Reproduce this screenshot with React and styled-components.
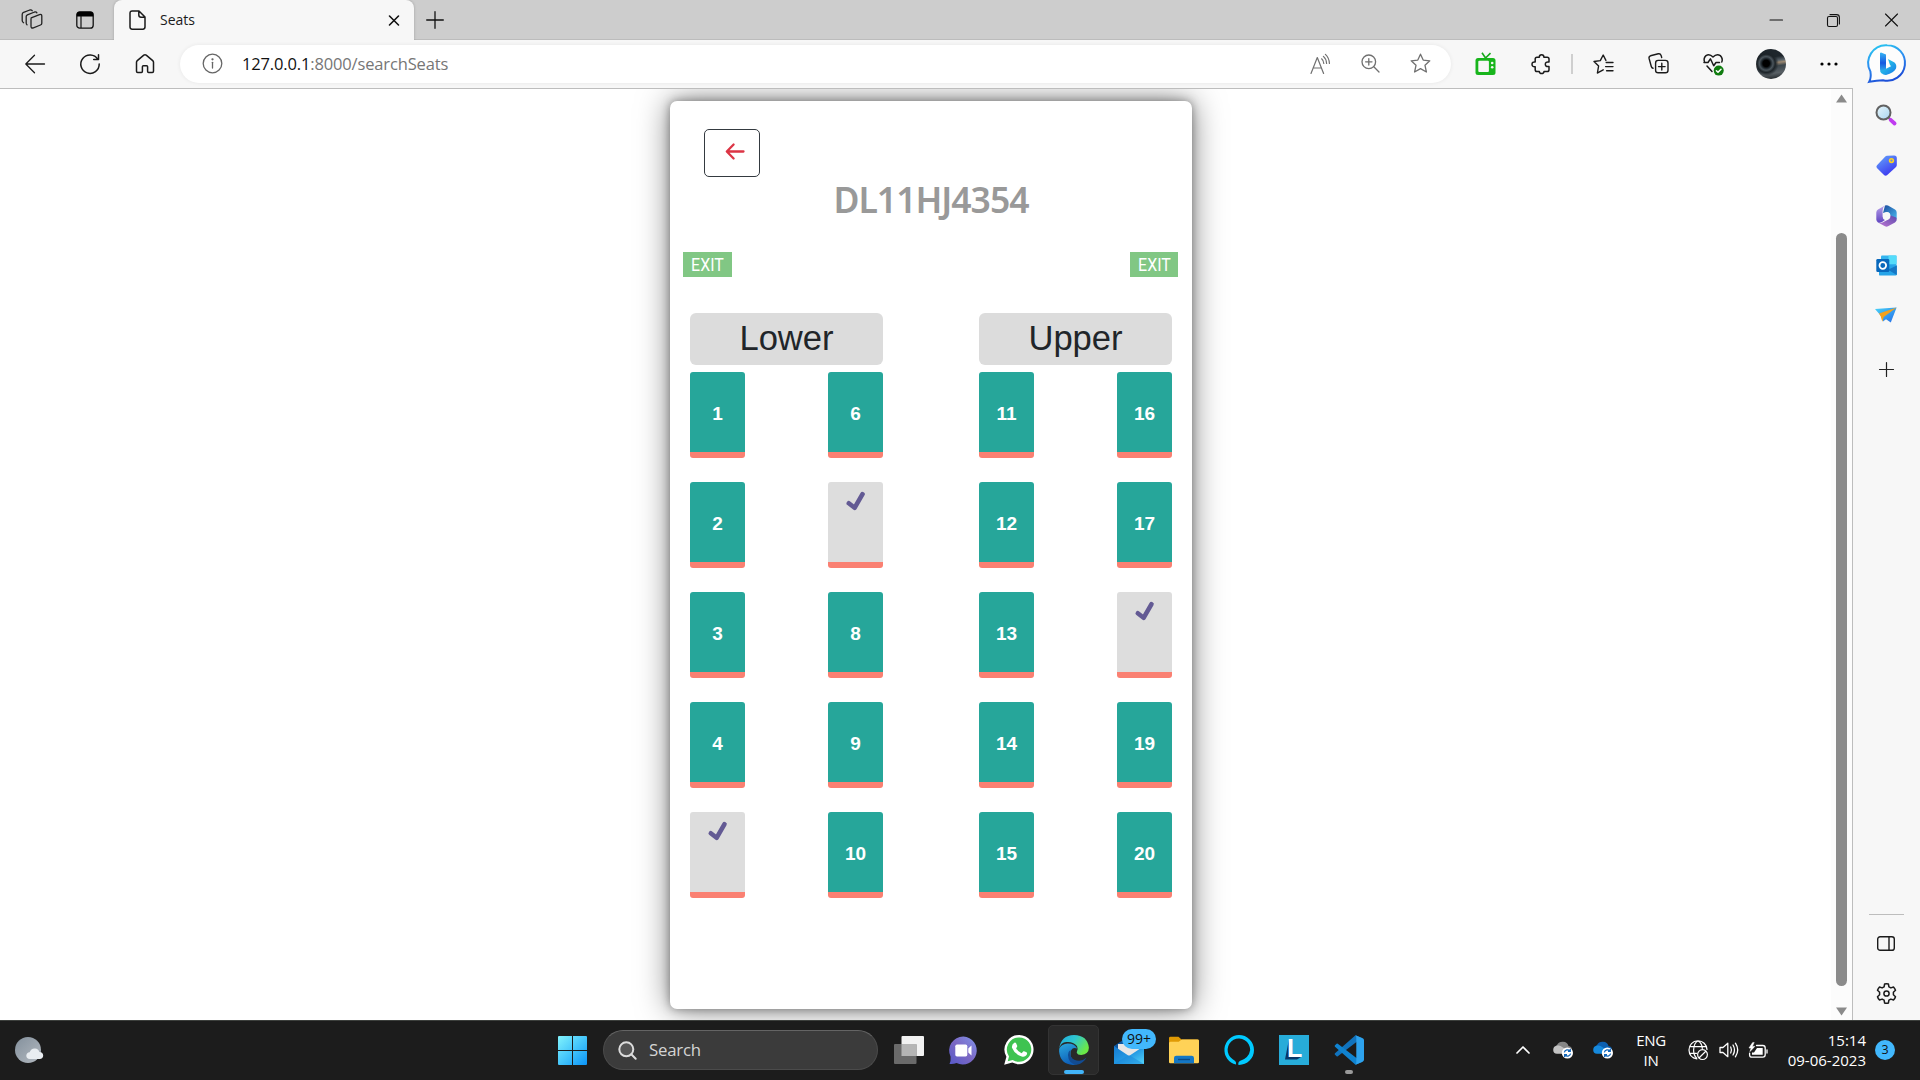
import React from "react";
import styled, { createGlobalStyle } from "styled-components";

const ui = `"Open Sans", "Noto Sans", sans-serif`;
const arial = `"Liberation Sans", Arial, sans-serif`;

const GlobalStyle = createGlobalStyle`
  * { box-sizing: border-box; }
  body { margin: 0; background: #fff; overflow: hidden; font-family: ${ui}; }
  svg { display: block; flex: none; overflow: visible; }
`;

const Screen = styled.div`
  width: 1920px;
  height: 1080px;
  display: flex;
  flex-direction: column;
  overflow: hidden;
`;

/* ---------- browser chrome ---------- */

const TabStrip = styled.header`
  height: 40px;
  flex: none;
  display: flex;
  background: #cdcdcd;
  box-shadow: inset 0 -1px 0 #bcbcbc;
`;
const StripTools = styled.div`
  width: 114px;
  display: flex;
  align-items: center;
  gap: 33px;
  padding-left: 21px;
`;
const Tab = styled.div`
  width: 300px;
  display: flex;
  align-items: center;
  padding: 0 14px 0 15px;
  background: #f7f7f7;
  border-radius: 8px 8px 0 0;
  box-shadow: 0 0 3px rgba(0, 0, 0, 0.22);
  clip-path: inset(0 -4px 0 -4px);
`;
const TabTitle = styled.span`
  flex: 1;
  margin-left: 14px;
  font-size: 14px;
  line-height: 20px;
  color: #1b1b1b;
`;
const NewTab = styled.div`
  flex: 1;
  display: flex;
  align-items: center;
  padding-left: 12px;
`;
const WindowButton = styled.div`
  width: 57.5px;
  display: flex;
  align-items: center;
  justify-content: center;
`;
const Toolbar = styled.nav`
  height: 49px;
  flex: none;
  display: flex;
  align-items: center;
  padding: 0 4px 2px 7px;
  background: #f7f7f7;
`;
const ToolButton = styled.div`
  width: ${(p) => p.$w || 55}px;
  height: 47px;
  flex: none;
  display: flex;
  align-items: center;
  justify-content: center;
`;
const Divider = styled.div`
  width: 2px;
  height: 20px;
  margin: 0 3px;
  background: #cfcfcf;
`;
const AddressBar = styled.div`
  flex: 1;
  height: 38px;
  margin: 0 7px 0 8px;
  padding: 0 6px 0 22px;
  display: flex;
  align-items: center;
  border-radius: 19px;
  background: #fff;
  box-shadow: 0 0 4px rgba(0, 0, 0, 0.07);
`;
const Url = styled.div`
  flex: 1;
  margin-left: 19px;
  font-size: 16.5px;
  letter-spacing: -0.15px;
  line-height: 24px;
  color: #767676;
  b { font-weight: 400; color: #111; }
`;
const Avatar = styled.div`
  width: 30px;
  height: 30px;
  border-radius: 50%;
  background:
    radial-gradient(circle at 34% 48%, #000 0 13%, #1c242a 19%, #4b555c 27%, #1c2328 36%, transparent 50%),
    linear-gradient(172deg, #1e262c 0 30%, #59636a 42%, #9b8871 48%, #3a444b 58%, #596065 78%, #15191c 100%);
`;

/* ---------- page ---------- */

const Body = styled.div`
  height: 931px;
  flex: none;
  display: flex;
  background: #f7f7f7;
`;
const Viewport = styled.main`
  width: 1853px;
  display: flex;
  justify-content: space-between;
  background: #fff;
  border: solid #bdbdbd;
  border-width: 1px 1px 0 0;
  margin-top: -1px;
  overflow: hidden;
`;
const Card = styled.section`
  width: 522px;
  height: 908px;
  margin: 12px 0 0 670px;
  padding: 28px 20px 0;
  border-radius: 7px;
  background: #fff;
  box-shadow: 0 0 32px rgba(0, 0, 0, 0.5), 0 0 10px rgba(0, 0, 0, 0.36);
`;
const BackButton = styled.button`
  display: flex;
  align-items: flex-start;
  width: 56px;
  height: 48px;
  margin-left: 14px;
  padding: 13px 0 0 20px;
  border: 1px solid #343a40;
  border-radius: 5px;
  background: #fff;
`;
const BusNumber = styled.h1`
  height: 46px;
  margin: 0;
  text-align: center;
  font: 600 35.5px/44px "Noto Sans", "Open Sans", sans-serif;
  letter-spacing: -1px;
  color: #999;
`;
const Exits = styled.div`
  display: flex;
  justify-content: space-between;
  margin: 29px -6px 0 -7px;
`;
const Exit = styled.div`
  width: ${(p) => p.$w}px;
  height: 25px;
  display: flex;
  justify-content: center;
  background: #81c784;
  color: #fff;
  font: 400 19px/26px Roboto, sans-serif;
  span { transform: scaleX(0.84); }
`;
const Decks = styled.div`
  display: flex;
  justify-content: space-between;
  margin-top: 36px;
`;
const Deck = styled.div`
  width: 193px;
`;
const DeckTitle = styled.h2`
  height: 52px;
  margin: 0 0 7px;
  border-radius: 6px;
  background: #dcdcdc;
  text-align: center;
  font: 400 34.6px/51px ${arial};
  color: #212529;
`;
const Seats = styled.div`
  display: grid;
  grid-template-columns: 55px 55px;
  grid-auto-flow: column;
  grid-template-rows: repeat(5, 86px);
  justify-content: space-between;
  row-gap: 24px;
`;
const Seat = styled.div`
  display: flex;
  justify-content: center;
  align-items: ${(p) => (p.$taken ? "flex-start" : "center")};
  padding-top: ${(p) => (p.$taken ? 9 : 3)}px;
  border-bottom: 6px solid salmon;
  border-radius: 3px;
  background: ${(p) => (p.$taken ? "#dddddd" : "#26a69a")};
  color: #fff;
  font: 700 19px/22px ${arial};
`;
const ScrollTrack = styled.div`
  width: 21px;
  display: flex;
  flex-direction: column;
  align-items: center;
  padding: 5px 0 4px;
  background: #fcfcfc;
`;
const Thumb = styled.div`
  width: 11px;
  height: 753px;
  margin: 130px 0 21px;
  border-radius: 6px;
  background: #8b8b8b;
`;
const Side = styled.aside`
  flex: 1;
  display: flex;
  flex-direction: column;
  align-items: center;
  padding-right: 1px;
`;
const SideItem = styled.div`
  height: ${(p) => p.$h || 50}px;
  display: flex;
  align-items: center;
`;
const SideRule = styled.div`
  width: 35px;
  height: 1px;
  margin: auto 0 3px;
  background: #bdbdbd;
`;

/* ---------- taskbar ---------- */

const Taskbar = styled.footer`
  height: 60px;
  flex: none;
  display: flex;
  align-items: center;
  padding-bottom: 1px;
  background: #1c1c1c;
  border-top: 1px solid #3c3f3c;
  color: #fff;
`;
const Weather = styled.div`
  width: 558px;
  padding-left: 14px;
`;
const SearchBox = styled.div`
  width: 275px;
  height: 40px;
  margin: 0 3px 0 16px;
  padding: 0 14px;
  display: flex;
  align-items: center;
  gap: 12px;
  border-radius: 20px;
  border: 1px solid #4b4b4b;
  border-top-color: #646464;
  background: #3b3b3b;
  color: #d4d4d4;
  font-size: 16.8px;
  line-height: 24px;
  letter-spacing: -0.2px;
`;
const App55 = styled.div`
  position: relative;
  width: 51px;
  height: 50px;
  margin: 0 2px;
  display: flex;
  align-items: center;
  justify-content: center;
  border-radius: 5px;
  border: 1px solid ${(p) => (p.$active ? "#333" : "transparent")};
  background: ${(p) => (p.$active ? "#292929" : "none")};
`;
const Indicator = styled.i`
  position: absolute;
  bottom: 0;
  width: ${(p) => (p.$on ? 20 : 8)}px;
  height: 4px;
  border-radius: 2px;
  background: ${(p) => (p.$on ? "#42b4f8" : "#9a9a9a")};
`;
const MailBadge = styled.span`
  position: absolute;
  left: 18px;
  top: 3px;
  width: 34px;
  height: 20px;
  border-radius: 10px;
  background: #42b8fd;
  color: #111;
  text-align: center;
  font-size: 14px;
  line-height: 20px;
`;
const Tray = styled.div`
  flex: 1;
  display: flex;
  align-items: center;
  justify-content: flex-end;
  padding-right: 25px;
`;
const TrayIcon = styled.div`
  width: ${(p) => p.$w}px;
  display: flex;
  justify-content: center;
`;
const TrayText = styled.div`
  width: ${(p) => p.$w}px;
  text-align: ${(p) => p.$align || "center"};
  font-size: 15px;
  line-height: 20px;
  letter-spacing: ${(p) => (p.$align ? 0 : -0.3)}px;
`;
const Count = styled.span`
  width: 20px;
  height: 20px;
  margin-left: 9px;
  border-radius: 50%;
  background: #42b8fd;
  color: #111;
  text-align: center;
  font-size: 12.5px;
  line-height: 20px;
`;

const Line = ({ w = 20, h = w, box, c = "#1b1b1b", s = 1.3, children, ...rest }) => (
  <svg width={w} height={h} viewBox={box || `0 0 ${w} ${h}`} fill="none" stroke={c} strokeWidth={s}
    strokeLinecap="round" strokeLinejoin="round" {...rest}>{children}</svg>
);

const Tick = () => (
  <Line w={20} h={20} c="#635a94" s={4.6}><path d="M2.8 12.3L8.6 16.8L16.5 3.2" /></Line>
);

function SeatDeck({ title, first, taken }) {
  return (
    <Deck>
      <DeckTitle>{title}</DeckTitle>
      <Seats>
        {Array.from({ length: 10 }, (_, i) => first + i).map((n) => (
          <Seat key={n} $taken={taken.includes(n)}>{taken.includes(n) ? <Tick /> : n}</Seat>
        ))}
      </Seats>
    </Deck>
  );
}

const Bing = () => (
  <svg width="38" height="40" viewBox="0 0 38 40">
    <defs>
      <linearGradient id="bingRing" x1="0" y1="0" x2="0.35" y2="1"><stop stopColor="#29cdf0" /><stop offset=".55" stopColor="#2b8cf0" /><stop offset="1" stopColor="#1d50d8" /></linearGradient>
      <linearGradient id="bingStem" x1="0" y1="0" x2="0" y2="1"><stop stopColor="#36b5f4" /><stop offset=".5" stopColor="#1557e0" /><stop offset="1" stopColor="#35c8ee" /></linearGradient>
      <linearGradient id="bingBowl" x1="0" y1="0" x2="1" y2="1"><stop stopColor="#2ee0e8" /><stop offset="1" stopColor="#1677e8" /></linearGradient>
    </defs>
    <path d="M19.2 1.2A17.8 17.8 0 1 1 15 36.3Q9 36.5 1.2 37.8Q3.4 34 2.4 27.5A17.8 17.8 0 0 1 19.2 1.2Z" fill="#fdfdfd" stroke="url(#bingRing)" strokeWidth="2" />
    <path d="M13 8.5L18 10.5V27L13.5 29.5Q12 28 12 25V9Z" fill="url(#bingStem)" />
    <path d="M20 15L26.5 18.5Q29 20.5 28 24.5Q26 28.5 18 31Q14.5 31 12.5 27.5L23 22.3L21.8 20.5Z" fill="url(#bingBowl)" />
  </svg>
);

function Chrome() {
  return (
    <>
      <TabStrip>
        <StripTools>
          <Line w={22} c="#222">
            <path d="M10.2 8.8L18.5 5.6Q20.8 5 20.8 7V14.2Q20.8 15.5 19.5 16L12.4 18.8Q10 19.6 10 17.3V9.6M6 15.8Q5.2 15.2 5.2 14V7.6Q5.2 6.4 6.4 5.8L13.6 3Q15.2 2.6 15.9 3.8M2.6 13.8Q1.2 13 1.2 11.6V5.6Q1.2 4 2.6 3.4L8.8 1Q10.4.6 11.2 1.7" />
          </Line>
          <svg width="18" height="18" viewBox="0 0 18 18"><rect x=".8" y=".8" width="16.4" height="16.4" rx="3" fill="none" stroke="#111" strokeWidth="1.3" /><path d="M.8 5.5V3.5Q.8.8 3.5.8H14.5Q17.2.8 17.2 3.5V5.5Z" fill="#000" /><path d="M5 5V17" stroke="#111" strokeWidth="1.2" /></svg>
        </StripTools>
        <Tab>
          <Line w={17} h={20} s={1.5}><path d="M3.2 1H10L16 7V16.8Q16 19.2 13.8 19.2H3.2Q1 19.2 1 16.8V3.2Q1 1 3.2 1ZM9.8 1V5Q9.8 7.2 12 7.2H16" /></Line>
          <TabTitle>Seats</TabTitle>
          <Line w={12} s={1.6} c="#111"><path d="M1.5 2L10.5 11M10.5 2L1.5 11" /></Line>
        </Tab>
        <NewTab><Line w={18} c="#111"><path d="M9 .7V17.3M.7 9H17.3" /></Line></NewTab>
        <WindowButton><Line w={13} s={1.1} c="#111"><path d="M0 6H12.5" /></Line></WindowButton>
        <WindowButton><Line w={13} s={1.1} c="#111"><rect x=".5" y="2.5" width="10" height="10" rx="1.5" /><path d="M3 .6H9.5Q12.4.6 12.4 3.5V10" /></Line></WindowButton>
        <WindowButton><Line w={13} s={1.1} c="#111"><path d="M.5 0L12.5 12M12.5 0L.5 12" /></Line></WindowButton>
      </TabStrip>
      <Toolbar>
        <ToolButton><Line w={20}><path d="M19.5 10H.8M9.5 1.3L.8 10L9.5 18.7" /></Line></ToolButton>
        <ToolButton><Line w={20} s={1.5}><path d="M17.8 5.3A9.2 9.2 0 1 0 19.2 10M18.5 .8V5.6H13.7" /></Line></ToolButton>
        <ToolButton><Line w={20} s={1.5}><path d="M1.5 8.2Q1.5 7.3 2.3 6.6L8.8 1.1Q10 .2 11.2 1.1L17.7 6.6Q18.5 7.3 18.5 8.2V17.3Q18.5 18.5 17.3 18.5H13.6Q12.6 18.5 12.6 17.3V12.8Q12.6 11.8 11.6 11.8H8.4Q7.4 11.8 7.4 12.8V17.3Q7.4 18.5 6.4 18.5H2.7Q1.5 18.5 1.5 17.3Z" /></Line></ToolButton>
        <AddressBar>
          <Line w={21} c="#666"><circle cx="10.5" cy="10.5" r="9.3" /><path d="M10.5 9.3V15" /><circle cx="10.5" cy="6.3" r=".5" fill="#666" /></Line>
          <Url><b>127.0.0.1</b>:8000/searchSeats</Url>
          <ToolButton $w={50}><Line w={20} c="#707070" s={1.2}><path d="M1 19.5L7.3 3.5L13.6 19.5M3.3 14H11.3M11.6 4.8Q13.6 6.4 13.8 9.5M13.4 2.4Q16.4 5 16.6 9.5M15.4 .4Q19.2 4 19.4 9.4" /></Line></ToolButton>
          <ToolButton $w={50}><Line w={19} c="#707070"><circle cx="7.8" cy="7.8" r="6.8" /><path d="M12.8 12.8L18 18M7.8 4.6V11M4.6 7.8H11" /></Line></ToolButton>
          <ToolButton $w={50}><Line w={21} c="#707070"><path d="M10.5 1.2L13.2 7.1L19.8 7.8L15 12.3L16.4 19L10.5 15.6L4.6 19L6 12.3L1.2 7.8L7.8 7.1Z" /></Line></ToolButton>
        </AddressBar>
        <ToolButton>
          <svg width="21" height="24" viewBox="0 0 21 24"><path d="M7 .8L10.5 6L15.5 1.2" stroke="#18a91c" strokeWidth="1.6" fill="none" /><rect x=".5" y="6" width="20" height="17" rx="2.5" fill="#18b51c" /><rect x="3.3" y="8.8" width="10.6" height="11.3" rx="1" fill="#f7f7f7" /><circle cx="17.2" cy="11" r="1.3" fill="#f7f7f7" /><circle cx="17.2" cy="15.2" r="1.3" fill="#f7f7f7" /></svg>
        </ToolButton>
        <ToolButton><Line w={20} s={1.5}><path d="M6 3.2H8.3Q8.3 .8 10.6 .8Q12.9 .8 12.9 3.2H16.2Q18 3.2 18 5V8Q14.3 7.4 14.3 10.3Q14.3 13.1 18 12.5V15.7Q18 17.5 16.2 17.5H13Q12.9 19.6 10.7 19.6Q8.4 19.6 8.3 17.5H6Q4.2 17.5 4.2 15.7V12.7Q1 13 1 10.3Q1 7.6 4.2 8V5Q4.2 3.2 6 3.2Z" /></Line></ToolButton>
        <Divider />
        <ToolButton><Line w={21} h={20} s={1.4}><path d="M6 18.2L4.4 19L5.6 12L1 7.5L7.3 6.6L10.2 1L12.9 6.4M6 18.2L10.2 15.8M13.2 8.5H20M12.6 12.6H20M13.6 16.7H20" /></Line></ToolButton>
        <ToolButton><Line w={21} s={1.4}><rect x="7.6" y="7.4" width="12.4" height="12.4" rx="2.6" /><path d="M13.8 10.3V17M10.5 13.6H17.1M5 15.3Q3.7 15 3.3 13.5L1.1 5.5Q.6 3.4 2.5 2.8L10.3.8Q12.4.4 13.1 2.4L13.7 4.5" /></Line></ToolButton>
        <ToolButton>
          <Line w={21} h={22} s={1.5}><path d="M1.5 9Q.2 5 3 2.6Q6.4.2 10 4Q13.6.2 17.3 2.6Q20.2 5.5 18.8 9M1 9.5H5L7.4 5.8L10.7 12.8L13 9.5H16.5M4 13L9 18.5" /><circle cx="15.7" cy="17.6" r="5" fill="#107c10" stroke="none" /><path d="M13.4 17.7L15 19.3L18 16.2" stroke="#fff" /></Line>
        </ToolButton>
        <ToolButton $w={59}><Avatar /></ToolButton>
        <ToolButton $w={58}><svg width="18" height="4"><circle cx="2" cy="2" r="1.6" /><circle cx="9" cy="2" r="1.6" /><circle cx="16" cy="2" r="1.6" /></svg></ToolButton>
        <ToolButton $w={58}><Bing /></ToolButton>
      </Toolbar>
    </>
  );
}

function Sidebar() {
  return (
    <Side>
      <SideItem $h={51}>
        <svg width="22" height="22" viewBox="0 0 22 22"><defs><linearGradient id="lens" x1="0" y1="0" x2="1" y2="1"><stop stopColor="#e8f6fd" /><stop offset="1" stopColor="#a9d5ef" /></linearGradient></defs><path d="M13 13L16 16" stroke="#777" strokeWidth="2" /><path d="M15.6 15.8L19.6 19.5" stroke="#c03cf0" strokeWidth="3.8" strokeLinecap="round" /><circle cx="8.5" cy="8.5" r="7" fill="url(#lens)" stroke="#626262" strokeWidth="2" /></svg>
      </SideItem>
      <SideItem $h={51}>
        <svg width="21" height="21" viewBox="0 0 21 21"><defs><linearGradient id="tag" x1="0" y1="0" x2=".6" y2="1"><stop stopColor="#66a9fb" /><stop offset="1" stopColor="#3c38f0" /></linearGradient></defs><path d="M11 .8L18 .4Q20.8.3 20.8 3V10Q20.8 11.2 20 12L11 20.2Q9.4 21.2 8 20L.9 13Q-.2 11.6 1 10.3L9.3 1.6Q10 .9 11 .8Z" fill="url(#tag)" /><circle cx="15.5" cy="5.6" r="1.9" fill="#6f8bd8" stroke="#ffd21c" strokeWidth="1.6" /></svg>
      </SideItem>
      <SideItem $h={49}>
        <svg width="21" height="22" viewBox="0 0 21 22"><defs><linearGradient id="m1" x1="0" y1="0" x2="0" y2="1"><stop stopColor="#b8a0ea" /><stop offset="1" stopColor="#6045c0" /></linearGradient><linearGradient id="m2" x1="0" y1="0" x2="1" y2="1"><stop stopColor="#1c4a9c" /><stop offset="1" stopColor="#48b7ee" /></linearGradient><linearGradient id="m3" x1="0" y1="1" x2="1" y2="0"><stop stopColor="#c178d3" /><stop offset="1" stopColor="#5a49ae" /></linearGradient></defs><path d="M9 .6Q10.5-.3 12 .6L19 4.6Q20.7 5.6 20.7 7.4V14L14.2 10.5Q14.2 7.2 10.8 7L7 8Z" fill="url(#m2)" /><path d="M9 .6L2 4.6Q.3 5.6.3 7.4V14.6Q.3 16.4 2 17.4Q4 18.4 6 17L9 15Q6.6 13.7 6.6 11.4V5.5Q6.8 2 9 .6Z" fill="url(#m1)" /><path d="M2 17.4L9 21.3Q10.5 22.2 12 21.3L19 17.4Q21.7 15.2 20.2 12.4L14.2 10.3Q14 13.4 11.8 14.7L7 17.3Q4.5 18.7 2 17.4Z" fill="url(#m3)" /><circle cx="10.7" cy="11" r="3.7" fill="#f7f7f7" /></svg>
      </SideItem>
      <SideItem $h={51}>
        <svg width="21" height="21" viewBox="0 0 21 21"><rect x="5" y=".5" width="15.5" height="12" rx="1" fill="#34b5ef" /><path d="M12.5.5H20.5V9H12.5Z" fill="#54dcfa" /><path d="M3 9L20.8 10.5V19.5Q20.8 20.6 19.6 20.6H4.2Q3 20.6 3 19.4Z" fill="#26a4e8" /><path d="M20.8 10.5V20L12 14.8Z" fill="#1577c5" /><rect x=".3" y="4" width="13" height="13" rx="1.3" fill="#0868bc" /><circle cx="6.8" cy="10.5" r="3.3" fill="none" stroke="#fff" strokeWidth="1.8" /></svg>
      </SideItem>
      <SideItem $h={48}>
        <svg width="22" height="16" viewBox="0 0 22 16"><defs><linearGradient id="wing" x1="0" y1="0" x2="1" y2="1"><stop stopColor="#48d5f8" /><stop offset="1" stopColor="#246ae8" /></linearGradient></defs><path d="M0 2L21.6.4L15.8 15.6L11 12.3L8 14.5L6 9Z" fill="url(#wing)" /><path d="M21.6.4L4 6.5L5.8 9.5L7.3 14.8L8.7 10Z" fill="#f4a11c" /></svg>
      </SideItem>
      <SideItem $h={60}><Line w={15} c="#222" s={1.2}><path d="M7.5 .5V14.5M.5 7.5H14.5" /></Line></SideItem>
      <SideRule />
      <SideItem><Line w={18} h={15} s={1.4}><rect x=".7" y=".7" width="16.6" height="13.6" rx="2.4" /><path d="M12 1V14" /></Line></SideItem>
      <SideItem $h={52}>
        <Line w={21} s={1.5}><circle cx="10.5" cy="9.5" r="2.6" /><path transform="translate(0 -1)" d="M8.6 1Q10.5.6 12.4 1L12.9 3.8L14.9 4.9L17.5 4Q18.9 5.4 19.5 7.3L17.4 9.3V11.7L19.5 13.7Q18.9 15.6 17.5 17L14.9 16.1L12.9 17.2L12.4 20Q10.5 20.4 8.6 20L8.1 17.2L6.1 16.1L3.5 17Q2.1 15.6 1.5 13.7L3.6 11.7V9.3L1.5 7.3Q2.1 5.4 3.5 4L6.1 4.9L8.1 3.8Z" /></Line>
      </SideItem>
    </Side>
  );
}

const CloudSync = ({ left, right }) => (
  <svg width="20" height="18" viewBox="0 0 20 18">
    <path d="M4 4Q6 .5 10 .8Q14.5 1 15.5 5Q19 5.6 19 9L10 12L3 5Z" fill={right} />
    <path d="M4 12.8Q.2 12.5.2 8.9Q.4 5 4.3 4.6Q7 3.8 9.5 6.2L15 9.5L12 12.8Z" fill={left} />
    <circle cx="14.4" cy="12" r="5.6" fill="#fff" />
    <path d="M11.3 11.3A3.3 3.3 0 0 1 17 10M17.6 12.7A3.3 3.3 0 0 1 11.9 14M17.3 8V10.4H15M11.6 16V13.6H14" fill="none" stroke="#1266b8" strokeWidth="1.2" />
  </svg>
);

function WindowsBar() {
  return (
    <Taskbar>
      <Weather>
        <svg width="30" height="28" viewBox="0 0 30 28"><defs><linearGradient id="moon" x1="0" y1="0" x2="1" y2="1"><stop stopColor="#83909c" /><stop offset="1" stopColor="#b3b9c0" /></linearGradient></defs><circle cx="14" cy="14" r="13" fill="url(#moon)" /><path d="M15.8 23Q12.3 22.7 12.3 19.5Q12.6 16.5 15.6 16.3Q17 12.2 21 12.5Q24.5 12.7 25.3 16Q29.2 16.3 29.2 19.7Q29 22.8 25.7 23Z" fill="#e9edf1" /></svg>
      </Weather>
      <svg width="29" height="29" viewBox="0 0 29 29"><defs><linearGradient id="win" gradientUnits="userSpaceOnUse" x1="0" y1="0" x2="29" y2="29"><stop stopColor="#82f3fc" /><stop offset=".5" stopColor="#45c6fb" /><stop offset="1" stopColor="#0b94f7" /></linearGradient></defs><path d="M0 1Q0 0 1 0H14V14H0ZM15 0H28Q29 0 29 1V14H15ZM0 15H14V29H1Q0 29 0 28ZM15 15H29V28Q29 29 28 29H15Z" fill="url(#win)" /></svg>
      <SearchBox>
        <Line w={19} c="#dcdcdc" s={2}><circle cx="8.3" cy="8.3" r="7" fill="#555" /><path d="M13.3 13.3L17.7 17.7" /></Line>
        Search
      </SearchBox>
      <App55>
        <svg width="30" height="28" viewBox="0 0 30 28"><rect x="7.5" width="22.5" height="20" rx="1" fill="#f2f2f2" /><rect y="8" width="22.5" height="20" rx="1" fill="#6a6a6a" /><rect x="7.5" y="8" width="15" height="12" fill="#b5b5b5" /></svg>
      </App55>
      <App55>
        <svg width="29" height="29" viewBox="0 0 29 29"><defs><linearGradient id="chat" x1="0" y1="1" x2="1" y2="0"><stop stopColor="#5558c9" /><stop offset=".5" stopColor="#7c68c4" /><stop offset="1" stopColor="#8093ea" /></linearGradient></defs><path d="M14.5.5A14 14 0 1 1 7.5 27Q4.5 28.4.5 28Q2 25.5 1.6 20.8A14 14 0 0 1 14.5.5Z" fill="url(#chat)" /><rect x="6.3" y="8.5" width="12" height="12" rx="1.7" fill="#fff" /><path d="M19.3 12.5L22.5 9.5V19.5L19.3 16.5Z" fill="#fff" /></svg>
      </App55>
      <App55>
        <svg width="30" height="30" viewBox="0 0 30 30"><path d="M15.3 0A14.6 14.6 0 1 1 8.3 27.6L.2 29.8L2.4 21.8A14.6 14.6 0 0 1 15.3 0Z" fill="#fff" /><path d="M15.3 2.4A12.2 12.2 0 1 1 8.7 25L3.7 26.3L5 21.4A12.2 12.2 0 0 1 15.3 2.4Z" fill="#3fc351" /><path d="M10.3 7.8Q11.3 7.2 12.1 8.2L13.3 11.1Q13.3 12 12.1 13.3Q14 17 17.6 18.2L19.4 16.3Q20 15.9 22.8 17.4Q23.5 18 22.6 20Q20.8 22.4 17.7 21.5Q10.5 19.2 8 12.8Q7.5 9.5 10.3 7.8Z" fill="#fff" /></svg>
      </App55>
      <App55 $active>
        <svg width="30" height="30" viewBox="0 0 30 30"><defs><linearGradient id="edgeTop" x1="0" y1="0" x2="1" y2=".5"><stop stopColor="#1eaadf" /><stop offset=".5" stopColor="#2fc6d0" /><stop offset="1" stopColor="#6be847" /></linearGradient><linearGradient id="edgeLeft" x1="0" y1="0" x2=".4" y2="1"><stop stopColor="#2ba9e0" /><stop offset="1" stopColor="#0d5eb8" /></linearGradient></defs><path d="M.2 13.7Q2 6.5 8 7Q14 6.5 18 11Q19.5 14 17.7 17.5Q18.5 20 22.2 20Q29.8 19 29.9 12.8Q28.6.3 15 0Q2 .2.2 13.7Z" fill="url(#edgeTop)" /><path d="M.2 13.7Q2.5 8.7 8.8 8.4Q16 8.4 18.2 13.6Q13.6 11.6 11.6 16.5Q10 25.3 20.5 27.8Q17 30 14 30Q1.2 29 .1 16.5Z" fill="url(#edgeLeft)" /><path d="M11.7 14.5Q8.6 20.8 15.2 24.7Q22.4 27.6 27.5 22.5Q24.2 28.8 17.7 29.7Q9.2 28.6 9 20Q9.2 16.4 11.7 14.5Z" fill="#124b92" /></svg>
        <Indicator $on />
      </App55>
      <App55>
        <svg width="30" height="30" viewBox="0 0 30 30"><defs><linearGradient id="mail" x1="0" y1="0" x2="1" y2="1"><stop stopColor="#1478ce" /><stop offset=".5" stopColor="#2297e2" /><stop offset="1" stopColor="#55d5fa" /></linearGradient></defs><path d="M0 11L15 1L30 11V20H0Z" fill="#0d559d" /><path d="M4 9H26V17L15 22L4 16Z" fill="#e6e6e6" /><path d="M0 11L15 21L30 11V29H0Z" fill="url(#mail)" /><path d="M0 29L15 20L30 29Z" fill="#1a86da" opacity=".5" /></svg>
        <MailBadge>99+</MailBadge>
      </App55>
      <App55>
        <svg width="30" height="28" viewBox="0 0 30 28"><path d="M0 2.2Q0 .8 1.4.8H9.5L12.5 3.5H28.5Q30 3.5 30 5V12H0Z" fill="#e09a04" /><path d="M0 7.3Q0 5.8 1.4 5.8H9.7L12.7 3.6H28.5Q30 3.6 30 5V26Q30 27.3 28.7 27.3H1.3Q0 27.3 0 26Z" fill="#ffd257" /><path d="M5 27.3V22Q5 19.7 7.3 19.7H22.6Q25 19.7 25 22V27.3Z" fill="#1477c5" /><path d="M9 23.5H21" stroke="#0b4a86" strokeWidth="1.4" /></svg>
      </App55>
      <App55>
        <svg width="30" height="30" viewBox="0 0 30 30"><path d="M15 0A15 15 0 0 1 15 30Q14.3 30 14.2 29.2Q14.2 26.7 15.8 26Q25 23.2 26.2 15A11.3 11.3 0 1 0 8.7 24.3Q12 26 12 27.4V29.6A15 15 0 0 1 15 0Z" fill="#00caff" /></svg>
      </App55>
      <App55>
        <svg width="30" height="30" viewBox="0 0 30 30"><rect width="30" height="30" fill="#27acd9" /><path d="M10 4L6 24.5L10 22ZM6 24.5H18L22 22H10Z" fill="#0a3768" /><text x="8" y="22" fontFamily="Liberation Sans, sans-serif" fontWeight="700" fontSize="25" fill="#fff">L</text></svg>
      </App55>
      <App55>
        <svg width="30" height="30" viewBox="0 0 30 30"><path d="M21.5.2L1 18.3Q.2 19 1 19.8L2.6 21.3Q3.2 21.7 3.8 21.3L27.7 3Z" fill="#1173bd" /><path d="M21.5 29.8L1 11.7Q.2 11 1 10.2L2.6 8.7Q3.2 8.3 3.8 8.7L27.7 27Z" fill="#1083d0" /><path d="M21.5.2L28.7 3.3Q30 4 30 5.2V24.8Q30 26 28.7 26.7L21.5 29.8Q22.3 29 22.3 27.5V2.5Q22.3 1 21.5.2Z" fill="#2da2ed" /></svg>
        <Indicator />
      </App55>
      <Tray>
        <TrayIcon $w={40}><Line w={14} h={8} c="#fff" s={1.7}><path d="M1 7L7 1L13 7" /></Line></TrayIcon>
        <TrayIcon $w={40}><CloudSync left="#c3c3c3" right="#868686" /></TrayIcon>
        <TrayIcon $w={40}><CloudSync left="#1689dc" right="#0b5fb0" /></TrayIcon>
        <TrayText $w={56}>ENG<br />IN</TrayText>
        <TrayIcon $w={38}>
          <Line w={20} c="#fff" s={1.2}><path d="M9 19Q1.2 17.5 1 10A9 9 0 0 1 19 9.5M1.8 6.6H18.2M1.8 13.3H8.5M8.5 18Q5.5 15 5.6 10Q6 2.5 10 1Q14 3 14.3 8.4" /><circle cx="14.5" cy="14.6" r="4.9" fill="#1c1c1c" /><path d="M11.2 17.8L17.8 11.3" /></Line>
        </TrayIcon>
        <TrayIcon $w={23}>
          <Line w={20} h={16} c="#fff" s={1.3}><path d="M1 5.5H4L8.8 1.3V14.7L4 10.5H1ZM11.7 5Q13.2 8 11.7 11M14 3Q17 8 14 13M16.4 1.2Q21 8 16.4 14.8" /></Line>
        </TrayIcon>
        <TrayIcon $w={35}>
          <Line w={20} h={17} c="#fff" s={1.3}><path d="M8.5 3.5H14.8Q17.2 3.5 17.2 6V12.6Q17.2 15.2 14.8 15.2H4Q1.6 15.2 1.6 13V11.2M19 7.8V11" /><path d="M9 6H14.7V12.8H4V10.5H6Z" fill="#fff" stroke="none" /><path d="M4.5.8L1 6H3.2L2 9.5L6.8 4.4H4.3L6 .8Z" fill="#fff" strokeWidth=".6" /></Line>
        </TrayIcon>
        <TrayText $w={91} $align="right">15:14<br />09-06-2023</TrayText>
        <Count>3</Count>
      </Tray>
    </Taskbar>
  );
}

export default function App() {
  return (
    <Screen>
      <GlobalStyle />
      <Chrome />
      <Body>
        <Viewport>
          <Card>
            <BackButton aria-label="Back">
              <Line w={20} h={17} c="#dc3545" s={2.3}><path d="M18.5 8.5H2M8.6 1.5L1.8 8.5L8.6 15.5" /></Line>
            </BackButton>
            <BusNumber>DL11HJ4354</BusNumber>
            <Exits>
              <Exit $w={49}><span>EXIT</span></Exit>
              <Exit $w={48}><span>EXIT</span></Exit>
            </Exits>
            <Decks>
              <SeatDeck title="Lower" first={1} taken={[5, 7]} />
              <SeatDeck title="Upper" first={11} taken={[18]} />
            </Decks>
          </Card>
          <ScrollTrack>
            <svg width="11" height="9"><path d="M5.5 .5L11 8.5H0Z" fill="#8b8b8b" /></svg>
            <Thumb />
            <svg width="11" height="9"><path d="M5.5 8.5L11 .5H0Z" fill="#8b8b8b" /></svg>
          </ScrollTrack>
        </Viewport>
        <Sidebar />
      </Body>
      <WindowsBar />
    </Screen>
  );
}
